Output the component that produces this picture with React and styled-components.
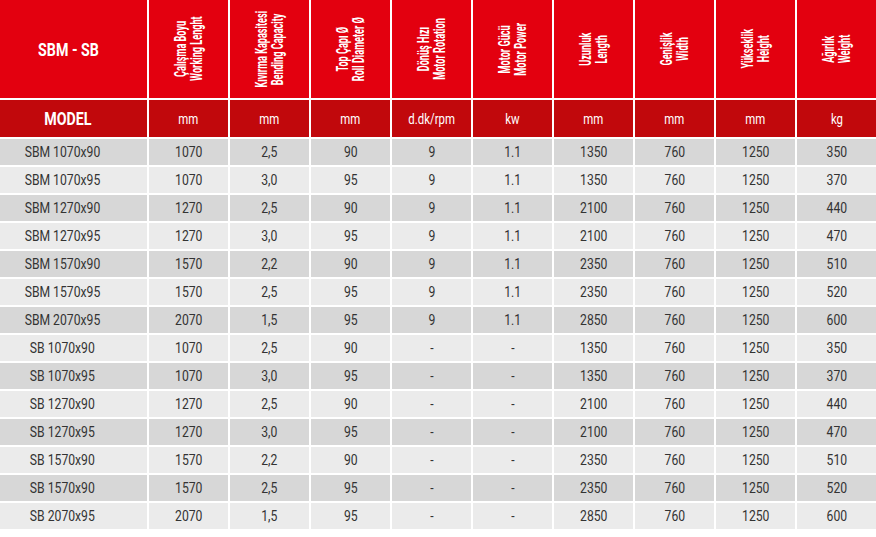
import React from "react";
import styled, { createGlobalStyle } from "styled-components";

const Global = createGlobalStyle`
  html, body { margin: 0; padding: 0; background: #ffffff; }
  body { font-family: Roboto, "Liberation Sans", Arial, sans-serif; }
`;

const COLS = "147px repeat(9, 1fr)";

const Table = styled.div`
  width: 876px;
  display: flex;
  flex-direction: column;
  gap: 2px;
  background: #ffffff;
`;

const Row = styled.div`
  display: grid;
  grid-template-columns: ${COLS};
  grid-template-rows: minmax(0, 1fr);
  column-gap: 2px;
  height: ${(p) => p.$h}px;
`;

const HeadCell = styled.div`
  background: #e3000f;
  display: flex;
  align-items: center;
  justify-content: center;
  min-height: 0;
  overflow: hidden;
  padding-right: ${(p) => (p.$first ? 11 : 0)}px;
  color: #ffffff;
`;

const UnitCell = styled.div`
  background: #c1080c;
  display: flex;
  align-items: center;
  justify-content: center;
  padding-right: ${(p) => (p.$first ? 11 : 0)}px;
  color: #ffffff;
`;

const DataCell = styled.div`
  background: ${(p) => (p.$alt ? "#ebebeb" : "#d7d7d7")};
  display: flex;
  align-items: center;
  justify-content: center;
  padding-right: ${(p) => (p.$first ? 22 : 0)}px;
  color: #333333;
`;

const Title = styled.span`
  display: inline-block;
  font-weight: 700;
  font-size: 18px;
  white-space: nowrap;
  transform: scaleX(0.79);
`;

const VLabel = styled.span`
  display: block;
  flex: none;
  writing-mode: vertical-rl;
  transform: rotate(180deg) scaleY(0.57);
  font-weight: 700;
  font-size: 16px;
  line-height: 16px;
  text-align: center;
  white-space: nowrap;
`;

const Unit = styled.span`
  display: inline-block;
  font-size: 15px;
  white-space: nowrap;
  transform: scaleX(0.76);
`;

const Value = styled.span`
  display: inline-block;
  font-size: 14px;
  white-space: nowrap;
  transform: scaleX(0.87);
`;

const labels = [
  ["Çalışma Boyu", "Working Lenght"],
  ["Kıvırma Kapasitesi", "Bending Capacity"],
  ["Top Çapı Ø", "Roll Diameter Ø"],
  ["Dönüş Hızı", "Motor Rotation"],
  ["Motor Gücü", "Motor Power"],
  ["Uzunluk", "Length"],
  ["Genişlik", "Width"],
  ["Yükseklik", "Height"],
  ["Ağırlık", "Weight"],
];

const units = ["mm", "mm", "mm", "d.dk/rpm", "kw", "mm", "mm", "mm", "kg"];

const rows = [
  ["SBM 1070x90", "1070", "2,5", "90", "9", "1.1", "1350", "760", "1250", "350"],
  ["SBM 1070x95", "1070", "3,0", "95", "9", "1.1", "1350", "760", "1250", "370"],
  ["SBM 1270x90", "1270", "2,5", "90", "9", "1.1", "2100", "760", "1250", "440"],
  ["SBM 1270x95", "1270", "3,0", "95", "9", "1.1", "2100", "760", "1250", "470"],
  ["SBM 1570x90", "1570", "2,2", "90", "9", "1.1", "2350", "760", "1250", "510"],
  ["SBM 1570x95", "1570", "2,5", "95", "9", "1.1", "2350", "760", "1250", "520"],
  ["SBM 2070x95", "2070", "1,5", "95", "9", "1.1", "2850", "760", "1250", "600"],
  ["SB 1070x90", "1070", "2,5", "90", "-", "-", "1350", "760", "1250", "350"],
  ["SB 1070x95", "1070", "3,0", "95", "-", "-", "1350", "760", "1250", "370"],
  ["SB 1270x90", "1270", "2,5", "90", "-", "-", "2100", "760", "1250", "440"],
  ["SB 1270x95", "1270", "3,0", "95", "-", "-", "2100", "760", "1250", "470"],
  ["SB 1570x90", "1570", "2,2", "90", "-", "-", "2350", "760", "1250", "510"],
  ["SB 1570x90", "1570", "2,5", "95", "-", "-", "2350", "760", "1250", "520"],
  ["SB 2070x95", "2070", "1,5", "95", "-", "-", "2850", "760", "1250", "600"],
];

export default function App() {
  return (
    <>
      <Global />
      <Table>
        <Row $h={98}>
          <HeadCell $first>
            <Title>SBM - SB</Title>
          </HeadCell>
          {labels.map(([tr, en], i) => (
            <HeadCell key={i}>
              <VLabel>
                {tr}
                <br />
                {en}
              </VLabel>
            </HeadCell>
          ))}
        </Row>
        <Row $h={37}>
          <UnitCell $first>
            <Title>MODEL</Title>
          </UnitCell>
          {units.map((u, i) => (
            <UnitCell key={i}>
              <Unit>{u}</Unit>
            </UnitCell>
          ))}
        </Row>
        {rows.map((r, ri) => (
          <Row $h={26} key={ri}>
            {r.map((v, ci) => (
              <DataCell key={ci} $first={ci === 0} $alt={ri % 2 === 1}>
                <Value>{v}</Value>
              </DataCell>
            ))}
          </Row>
        ))}
      </Table>
    </>
  );
}
